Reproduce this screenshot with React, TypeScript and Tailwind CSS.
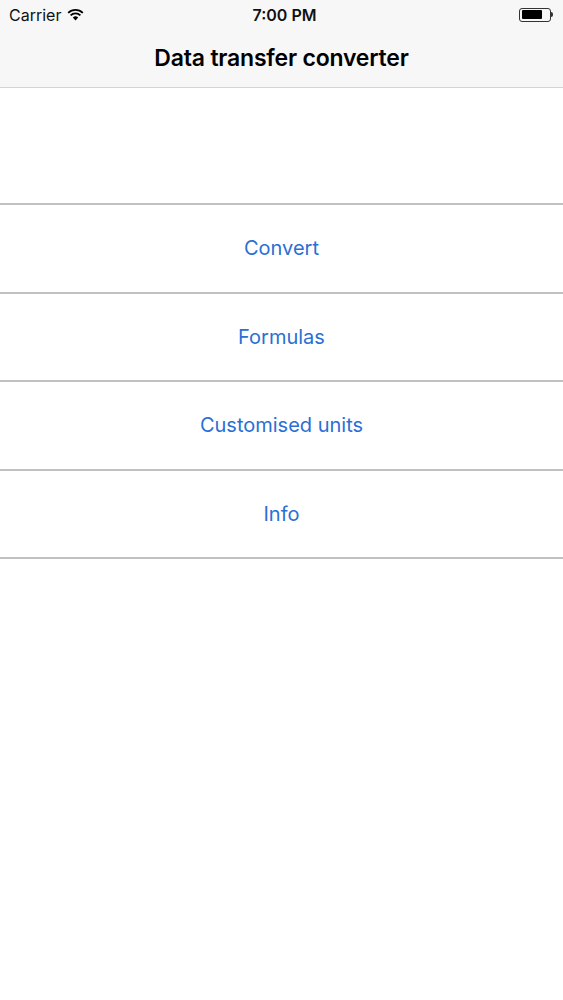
import * as React from "react";

const items = ["Convert", "Formulas", "Customised units", "Info"];

const Wifi = () => (
  <svg width="17" height="13" viewBox="0 0 17 13" className="ml-[6px]">
    <path d="M8.5 12.5 L5.8 9.6 A4 4 0 0 1 11.2 9.6 Z" fill="#000" />
    <path d="M3.6 7.4 A7 7 0 0 1 13.4 7.4" stroke="#000" strokeWidth="1.8" fill="none" />
    <path d="M1.2 4.9 A10.5 10.5 0 0 1 15.8 4.9" stroke="#000" strokeWidth="1.8" fill="none" />
  </svg>
);

const Battery = () => (
  <div className="flex items-center">
    <div className="w-[32px] h-[14px] rounded-[3px] border border-[#333] p-[1.5px] flex">
      <div className="w-[20px] h-full bg-black rounded-[1px]" />
    </div>
    <div className="w-[2px] h-[5px] bg-[#333] rounded-r-sm" />
  </div>
);

export default function App() {
  return (
    <div className="w-[563px] h-[1000px] bg-white" style={{ fontFamily: "Inter, 'Liberation Sans', sans-serif" }}>
      {/* Header */}
      <div className="bg-[#f7f7f8] border-b border-[#d4d4d8]">
        <div className="h-[29px] grid grid-cols-3 items-center px-[9px] text-[16px] text-[#111]">
          <div className="flex items-center">
            <span>Carrier</span>
            <Wifi />
          </div>
          <span className="font-semibold text-center pl-[6px]">7:00 PM</span>
          <div className="flex justify-end pr-[1px]">
            <Battery />
          </div>
        </div>
        <div className="h-[58px] flex items-center justify-center">
          <span className="text-[23px] font-semibold text-black tracking-[-0.2px]">Data transfer converter</span>
        </div>
      </div>

      {/* Spacer */}
      <div className="h-[115px]" />

      {/* Menu */}
      <div className="border-t-2 border-[#c0c0c0]">
        {items.map((label) => (
          <div key={label} className="h-[88.5px] flex items-center justify-center border-b-2 border-[#c0c0c0]">
            <span className="text-[20px] text-[#2a6fd4]">{label}</span>
          </div>
        ))}
      </div>
    </div>
  );
}
